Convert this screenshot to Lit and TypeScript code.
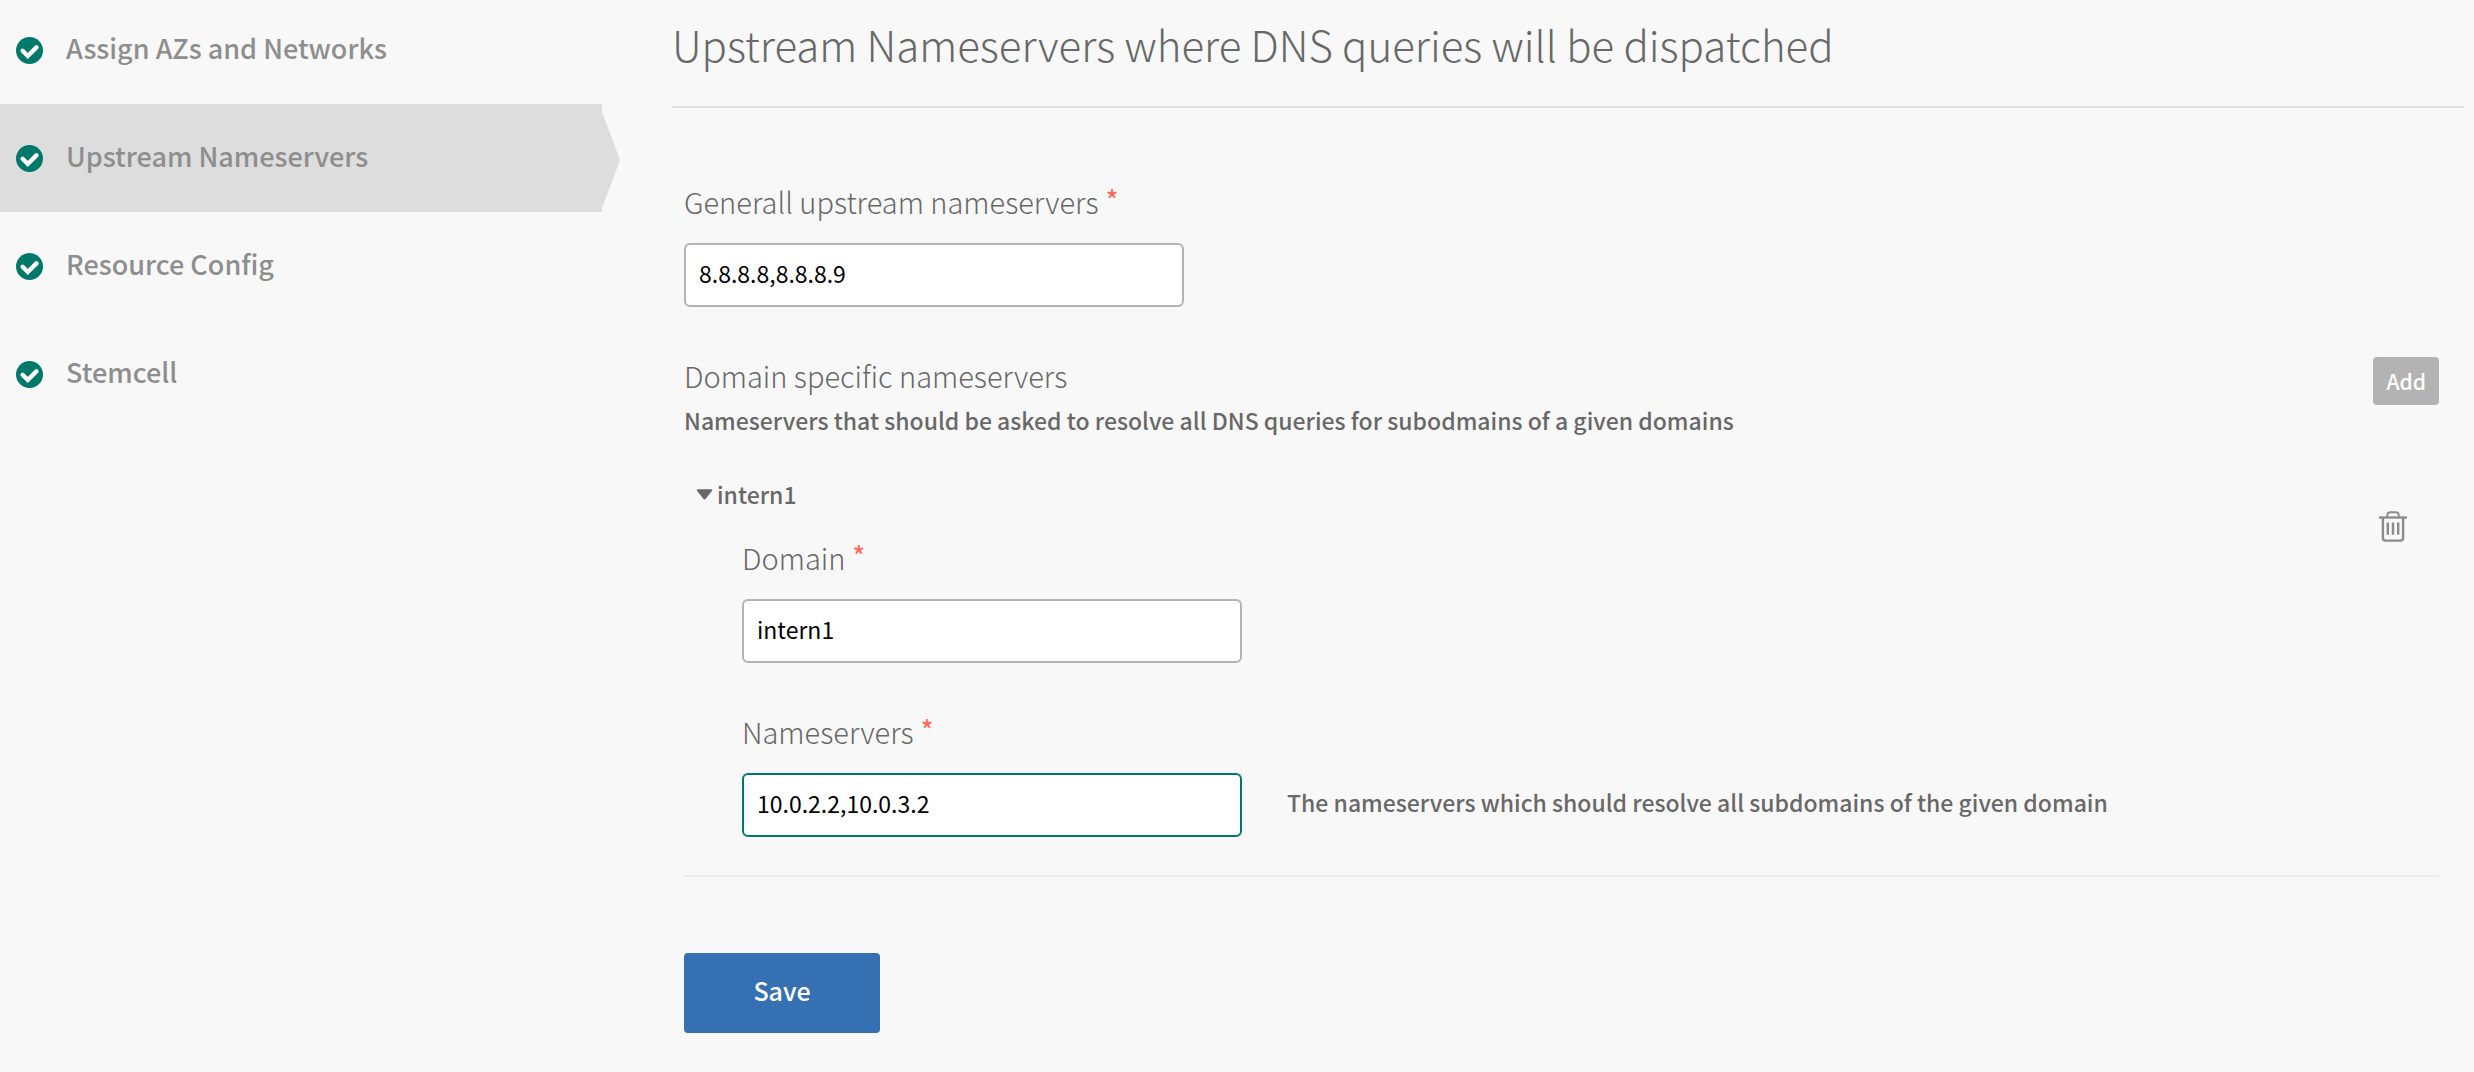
import { LitElement, html, css, svg } from "lit";
import { customElement, property } from "lit/decorators.js";
import { classMap } from "lit/directives/class-map.js";

const steps = [
  { label: "Assign AZs and Networks", active: false },
  { label: "Upstream Nameservers", active: true },
  { label: "Resource Config", active: false },
  { label: "Stemcell", active: false },
];

@customElement("step-nav")
export class StepNav extends LitElement {
  static styles = css`
    :host {
      display: block;
    }
    .list {
      list-style: none;
      margin: 0;
      padding: 0;
    }
    .link {
      position: relative;
      display: flex;
      align-items: center;
      gap: 23px;
      box-sizing: border-box;
      height: 108px;
      padding: 0 16px;
      color: #8e8e8e;
      font-size: 27px;
      font-weight: 500;
      line-height: 40px;
      text-decoration: none;
    }
    .list li:first-child .link {
      height: 104px;
      padding-bottom: 4px;
    }
    .active {
      background: #dddddd;
    }
    .active::after {
      content: "";
      position: absolute;
      left: 100%;
      top: 8px;
      bottom: 4px;
      width: 18px;
      background: #dddddd;
      clip-path: polygon(0 0, 100% 50%, 0 100%);
    }
    .name {
      padding-bottom: 4px;
    }
    .check {
      width: 27px;
      height: 27px;
      flex: none;
    }
  `;

  render() {
    return html`
      <nav aria-label="Settings">
        <ul class="list">
          ${steps.map(
            (s) => html`<li>
              <a class=${classMap({ link: true, active: s.active })} href="#">
                <svg class="check" viewBox="0 0 27 27" aria-hidden="true">
                  ${svg`<circle cx="13.5" cy="13.5" r="13.5" fill="#00796b"/>
                  <path d="M6.6 13.8 L11.8 19 L20.4 10.4" fill="none" stroke="#fff" stroke-width="4.4" stroke-linecap="round" stroke-linejoin="miter"/>`}
                </svg>
                <span class="name">${s.label}</span>
              </a>
            </li>`,
          )}
        </ul>
      </nav>
    `;
  }
}

@customElement("text-field")
export class TextField extends LitElement {
  @property() label = "";
  @property() value = "";
  @property() help = "";
  @property({ type: Boolean }) highlighted = false;

  static styles = css`
    :host {
      display: block;
    }
    .label {
      display: flex;
      gap: 7px;
      width: max-content;
      margin-bottom: 22px;
      font-size: 29px;
      font-weight: 300;
      line-height: 40px;
    }
    .required {
      color: #ff6a5c;
      font-size: 26px;
      font-weight: 500;
      line-height: 36px;
    }
    .row {
      display: flex;
      align-items: center;
      gap: 45px;
    }
    .input {
      box-sizing: border-box;
      width: 500px;
      height: 64px;
      padding: 0 13px 4px;
      border: 2px solid #b3b3b3;
      border-radius: 6px;
      background: #fff;
      color: #000;
      font-family: inherit;
      font-size: 23px;
      font-weight: 400;
      outline: none;
    }
    .input:focus,
    .highlighted {
      border-color: #00796b;
    }
    .help {
      padding-bottom: 6px;
      font-size: 23px;
      font-weight: 500;
      line-height: 40px;
    }
  `;

  render() {
    return html`
      <label class="label" for="field">
        ${this.label}<span class="required">*</span>
      </label>
      <div class="row">
        <input
          id="field"
          type="text"
          class=${classMap({ input: true, highlighted: this.highlighted })}
          .value=${this.value}
        />
        ${this.help ? html`<span class="help">${this.help}</span>` : null}
      </div>
    `;
  }
}

@customElement("app-root")
export class AppRoot extends LitElement {
  static styles = css`
    :host {
      display: block;
      min-height: 100vh;
      background: #f8f8f8;
      color: #686868;
      font-family: "Noto Sans CJK SC", "Noto Sans", sans-serif;
    }
    .page {
      display: grid;
      grid-template-columns: 602px minmax(0, 1fr);
      column-gap: 70px;
      padding-right: 10px;
    }
    .title {
      margin: 0;
      padding: 14px 0 32px;
      border-bottom: 2px solid #e2e2e2;
      font-size: 42px;
      font-weight: 300;
      line-height: 60px;
    }
    .form {
      padding: 73px 25px 39px 12px;
    }
    .section {
      display: flex;
      justify-content: space-between;
      align-items: flex-start;
      margin-top: 48px;
    }
    .subtitle {
      margin: 0 0 5px;
      font-size: 29px;
      font-weight: 300;
      line-height: 40px;
    }
    .text {
      margin: 0;
      font-size: 23px;
      font-weight: 500;
      line-height: 40px;
    }
    .add {
      margin-top: 2px;
      padding: 0 13px;
      border: 0;
      border-radius: 4px;
      background: #b3b3b3;
      color: #fff;
      font-family: inherit;
      font-size: 21px;
      font-weight: 500;
      line-height: 48px;
    }
    .record {
      display: flex;
      justify-content: space-between;
      align-items: flex-start;
      margin-top: 34px;
      padding-bottom: 38px;
      border-bottom: 2px solid #eaeaea;
    }
    .fields {
      display: grid;
      row-gap: 48px;
      padding: 23px 0 0 58px;
    }
    .toggle {
      display: flex;
      align-items: center;
      gap: 4px;
      padding: 0 0 0 12px;
      border: 0;
      background: none;
      color: inherit;
      font-family: inherit;
      font-size: 23px;
      font-weight: 500;
      line-height: 40px;
    }
    .caret {
      width: 17px;
      height: 12px;
    }
    .delete {
      margin: 37px 32px 0 0;
      padding: 0;
      border: 0;
      background: none;
      line-height: 0;
    }
    .trash {
      width: 28px;
      height: 31px;
    }
    .save {
      display: block;
      box-sizing: border-box;
      min-width: 196px;
      height: 80px;
      margin-top: 76px;
      padding: 0 24px 6px;
      border: 0;
      border-radius: 4px;
      background: #3571b2;
      color: #fff;
      font-family: inherit;
      font-size: 25px;
      font-weight: 500;
    }
  `;

  render() {
    return html`
      <div class="page">
        <step-nav></step-nav>
        <main>
          <h1 class="title">Upstream Nameservers where DNS queries will be dispatched</h1>
          <form class="form" @submit=${(e: Event) => e.preventDefault()}>
            <text-field label="Generall upstream nameservers" value="8.8.8.8,8.8.8.9"></text-field>
            <div class="section">
              <div>
                <h2 class="subtitle">Domain specific nameservers</h2>
                <p class="text">
                  Nameservers that should be asked to resolve all DNS queries for subodmains of a given domains
                </p>
              </div>
              <button class="add" type="button">Add</button>
            </div>
            <div class="record">
              <div>
                <button class="toggle" type="button" aria-expanded="true">
                  <svg class="caret" viewBox="0 0 17 12" aria-hidden="true">
                    <path d="M1.6 1.2 H15.4 Q17 1.4 16 2.8 L9.7 10.8 Q8.5 12 7.3 10.8 L1 2.8 Q0 1.4 1.6 1.2Z" fill="#686868" />
                  </svg>
                  intern1
                </button>
                <div class="fields">
                  <text-field label="Domain" value="intern1"></text-field>
                  <text-field
                    label="Nameservers"
                    value="10.0.2.2,10.0.3.2"
                    help="The nameservers which should resolve all subdomains of the given domain"
                    highlighted
                  ></text-field>
                </div>
              </div>
              <button class="delete" type="button" aria-label="Delete">
                <svg class="trash" viewBox="0 0 28 31" fill="none" stroke="#8c8c8c" stroke-width="2" aria-hidden="true">
                  <path d="M0 6.5 H28" stroke-width="2.4" />
                  <path d="M8.2 6 V4.6 Q8.2 1.2 11.6 1.2 H16.4 Q19.8 1.2 19.8 4.6 V6" />
                  <path d="M3.9 7 V27 Q3.9 29.6 6.7 29.6 H21.3 Q24.1 29.6 24.1 27 V7" stroke-width="2.4" />
                  <path d="M8.8 11.5 V23.8 M14 11.5 V23.8 M19.2 11.5 V23.8" stroke-width="2.4" />
                </svg>
              </button>
            </div>
            <button class="save" type="submit">Save</button>
          </form>
        </main>
      </div>
    `;
  }
}
